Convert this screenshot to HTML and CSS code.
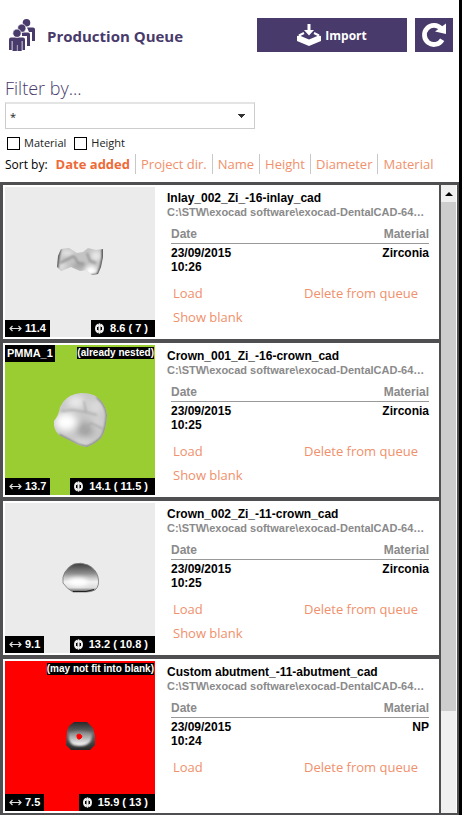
FILE: index.html
```html
<!DOCTYPE html>
<html lang="en">
<head>
    <meta charset="UTF-8">
    <meta name="viewport" content="width=device-width, initial-scale=1.0">
    <title>Production Queue</title>
    <link rel="stylesheet" href="styles.css">
</head>
<body>
    <!-- shared icons and shading -->
    <svg class="defs" width="0" height="0" aria-hidden="true">
        <defs>
            <symbol id="arrow-h" viewBox="0 0 13 7">
                <path d="M1 3.5h11M3.5 1L1 3.5 3.5 6M9.500 1L12 3.5 9.500 6" fill="none" stroke="#ddd" stroke-width="1.2"/>
            </symbol>
            <symbol id="arrow-v" viewBox="0 0 9 11">
                <path d="M3.500 0.500Q0 1.500 0 5.500t3.500 5zM5.500 0.500Q9 1.500 9 5.500t-3.500 5z" fill="#eee"/>
                <path d="M4.500 0l2.500 3.500H2zM4.500 11L2 7.500h5zM4 3h1v5H4z" fill="#eee"/>
                <path d="M2.500 4v3M6.500 4v3" stroke="#000" stroke-width="1"/>
            </symbol>
            <filter id="soft" x="-50%" y="-50%" width="200%" height="200%"><feGaussianBlur stdDeviation="2"/></filter>
            <filter id="softer" x="-50%" y="-50%" width="200%" height="200%"><feGaussianBlur stdDeviation="3.500"/></filter>
            <filter id="fine" x="-50%" y="-50%" width="200%" height="200%"><feGaussianBlur stdDeviation="1"/></filter>
            <linearGradient id="dome" x1="0" y1="0" x2="0" y2="1">
                <stop offset="0" stop-color="#3c3c3c"/>
                <stop offset="0.350" stop-color="#8c8c8c"/>
                <stop offset="0.500" stop-color="#c4c4c4"/>
                <stop offset="0.650" stop-color="#f2f2f2"/>
                <stop offset="0.850" stop-color="#dcdcdc"/>
                <stop offset="1" stop-color="#555"/>
            </linearGradient>
            <linearGradient id="cup" x1="0" y1="0" x2="0" y2="1">
                <stop offset="0" stop-color="#2a2a2a"/>
                <stop offset="0.400" stop-color="#6a6a6a"/>
                <stop offset="1" stop-color="#262626"/>
            </linearGradient>
            <linearGradient id="cup-in" x1="0" y1="0" x2="0" y2="1">
                <stop offset="0" stop-color="#777"/>
                <stop offset="1" stop-color="#fff"/>
            </linearGradient>
        </defs>
    </svg>

    <header>
        <svg class="people" width="26" height="32" viewBox="0 0 26 32" aria-hidden="true">
            <g fill="#483a6b">
                <path d="M18 8.500h6q2 0 2 2V22h-3V13h-3z"/>
                <circle cx="17.500" cy="3.800" r="3.800"/>
                <path d="M13 13.500h6q2 0 2 2V27h-3V17h-5z"/>
                <circle cx="12.800" cy="9.200" r="4.200" stroke="#fff" stroke-width="0.800"/>
                <path d="M2 18.500h12q2 0 2 2V31h-2.500v-9h-0.800v10H8.500v-6h-0.600v6H3.500V22h-0.800v9H0V20.500q0-2 2-2z"/>
                <circle cx="8" cy="14.200" r="4.200" stroke="#fff" stroke-width="0.800"/>
            </g>
        </svg>
        <h1>Production Queue</h1>
        <button class="import-btn" type="button">
            <svg width="24" height="22" viewBox="0 0 24 22" aria-hidden="true">
                <path d="M10.500 0h3v6H17l-5 5.500L7 6h3.500z" fill="#fff"/>
                <path d="M7 9L2 11.500M17 9l5 2.500" fill="none" stroke="#fff" stroke-width="2"/>
                <path d="M0 12l2.500-0.500L12 15.500l9.500-4L24 12v5l-12 5-12-5z" fill="#fff"/>
            </svg>
            Import
        </button>
        <button class="refresh-btn" type="button" aria-label="Refresh">
            <svg width="26" height="26" viewBox="0 0 26 26" aria-hidden="true">
                <path d="M20.300 6.900A9.500 9.500 0 1 0 21.200 17.700" fill="none" stroke="#fff" stroke-width="4.800"/>
                <path d="M25 1.500v10.500l-11-2.500z" fill="#fff"/>
            </svg>
        </button>
    </header>

    <section class="filter">
        <h2><label for="filter">Filter by...</label></h2>
        <select id="filter">
            <option>*</option>
        </select>
        <div class="checks">
            <label><input type="checkbox"> Material</label>
            <label><input type="checkbox"> Height</label>
        </div>
    </section>

    <nav class="sort">
        <span>Sort by:</span>
        <ul>
            <li><a class="active" href="#">Date added</a></li>
            <li><a href="#">Project dir.</a></li>
            <li><a href="#">Name</a></li>
            <li><a href="#">Height</a></li>
            <li><a href="#">Diameter</a></li>
            <li><a href="#">Material</a></li>
        </ul>
    </nav>

    <main class="queue">
        <div class="jobs">
            <article class="job">
                <div class="thumb">
                    <svg width="150" height="150" viewBox="0 0 150 150" aria-hidden="true">
                        <clipPath id="inlay"><path d="M56 62L64 61 72 66 78 65 83 61 91 63 98 62 98 70 96 80 93 87 87 88 81 83 75 84 66 80 56 84 52 80 53 69z"/></clipPath>
                        <g clip-path="url(#inlay)">
                            <path d="M50 59h50v31H50z" fill="#c4c4c4"/>
                            <g filter="url(#soft)">
                                <ellipse cx="62" cy="66" rx="7" ry="3" fill="#e4e4e4"/>
                                <ellipse cx="57" cy="79" rx="4" ry="5" fill="#ddd"/>
                                <ellipse cx="86" cy="84" rx="6" ry="5" fill="#fff"/>
                                <ellipse cx="91" cy="69" rx="5" ry="5" fill="#e8e8e8"/>
                                <ellipse cx="74" cy="79" rx="7" ry="3" fill="#a4a4a4"/>
                            </g>
                            <path d="M55 76l8-4 6-3M69 69l4 7 6 1M82 66l3 8 6 2" fill="none" stroke="#959595" stroke-width="2" filter="url(#fine)"/>
                            <path d="M98 61v10l-2 9-3 8-7 1M55 62l-2 8-1 11" fill="none" stroke="#222" stroke-width="2" filter="url(#fine)"/>
                        </g>
                    </svg>
                    <span class="tag bottom left"><svg width="13" height="7"><use href="#arrow-h"/></svg>11.4</span>
                    <span class="tag bottom right"><svg width="9" height="11"><use href="#arrow-v"/></svg>8.6 ( 7 )</span>
                </div>
                <div class="info">
                    <h3>Inlay_002_Zi_-16-inlay_cad</h3>
                    <p class="path">C:\STW\exocad software\exocad-DentalCAD-64bit\CAM</p>
                    <table>
                        <thead><tr><th>Date</th><th>Material</th></tr></thead>
                        <tbody><tr><td>23/09/2015<br>10:26</td><td>Zirconia</td></tr></tbody>
                    </table>
                    <div class="actions">
                        <a href="#">Load</a>
                        <a href="#">Delete from queue</a>
                        <a href="#">Show blank</a>
                    </div>
                </div>
            </article>

            <article class="job">
                <div class="thumb nested">
                    <svg width="150" height="150" viewBox="0 0 150 150" aria-hidden="true">
                        <clipPath id="crown"><path d="M58 57Q64 49 76 48 87 48 92 52 101 59 102 70 101 86 96 93 90 99 82 102 74 101 66 96L54 90Q48 84 49 76 54 70 55 62z"/></clipPath>
                        <g clip-path="url(#crown)">
                            <path d="M45 45h60v60H45z" fill="#c8c8c8"/>
                            <g filter="url(#softer)">
                                <ellipse cx="61" cy="77" rx="11" ry="9" fill="#fff"/>
                                <ellipse cx="71" cy="57" rx="9" ry="6" fill="#ececec"/>
                                <ellipse cx="91" cy="62" rx="8" ry="7" fill="#dcdcdc"/>
                                <ellipse cx="92" cy="77" rx="6" ry="5" fill="#d6d6d6"/>
                                <ellipse cx="80" cy="85" rx="8" ry="8" fill="#a0a0a0"/>
                                <ellipse cx="78" cy="97" rx="9" ry="4" fill="#ddd"/>
                            </g>
                            <path d="M56 66l12-1 12 2 12 3M79 56l2 11M98 84l-12-6-8 8" fill="none" stroke="#aaa" stroke-width="1.500" filter="url(#fine)"/>
                            <path d="M92 52Q101 59 102 70 101 86 96 93 90 99 82 102 74 101 66 96L54 90" fill="none" stroke="#777" stroke-width="2" filter="url(#fine)"/>
                        </g>
                    </svg>
                    <span class="tag top left">PMMA_1</span>
                    <span class="note">(already nested)</span>
                    <span class="tag bottom left"><svg width="13" height="7"><use href="#arrow-h"/></svg>13.7</span>
                    <span class="tag bottom right"><svg width="9" height="11"><use href="#arrow-v"/></svg>14.1 ( 11.5 )</span>
                </div>
                <div class="info">
                    <h3>Crown_001_Zi_-16-crown_cad</h3>
                    <p class="path">C:\STW\exocad software\exocad-DentalCAD-64bit\CAM</p>
                    <table>
                        <thead><tr><th>Date</th><th>Material</th></tr></thead>
                        <tbody><tr><td>23/09/2015<br>10:25</td><td>Zirconia</td></tr></tbody>
                    </table>
                    <div class="actions">
                        <a href="#">Load</a>
                        <a href="#">Delete from queue</a>
                        <a href="#">Show blank</a>
                    </div>
                </div>
            </article>

            <article class="job">
                <div class="thumb">
                    <svg width="150" height="150" viewBox="0 0 150 150" aria-hidden="true">
                        <path d="M69 61Q76 59 83 62 91 66 93 74 95 83 90 87 86 89 81 89L68 89Q62 86 58 80 57 74 60 69 64 63 69 61z" fill="url(#dome)" stroke="#777" stroke-width="0.800"/>
                        <ellipse cx="73" cy="79" rx="10" ry="4" fill="#fff" filter="url(#soft)"/>
                        <path d="M68 88.500h13l8-2" fill="none" stroke="#222"/>
                    </svg>
                    <span class="tag bottom left"><svg width="13" height="7"><use href="#arrow-h"/></svg>9.1</span>
                    <span class="tag bottom right"><svg width="9" height="11"><use href="#arrow-v"/></svg>13.2 ( 10.8 )</span>
                </div>
                <div class="info">
                    <h3>Crown_002_Zi_-11-crown_cad</h3>
                    <p class="path">C:\STW\exocad software\exocad-DentalCAD-64bit\CAM</p>
                    <table>
                        <thead><tr><th>Date</th><th>Material</th></tr></thead>
                        <tbody><tr><td>23/09/2015<br>10:25</td><td>Zirconia</td></tr></tbody>
                    </table>
                    <div class="actions">
                        <a href="#">Load</a>
                        <a href="#">Delete from queue</a>
                        <a href="#">Show blank</a>
                    </div>
                </div>
            </article>

            <article class="job">
                <div class="thumb misfit">
                    <svg width="150" height="150" viewBox="0 0 150 150" aria-hidden="true">
                        <path d="M69 61h13l6 6 2 8v9l-5 5H66l-5-5 1-14 2-5z" fill="url(#cup)"/>
                        <path d="M64 72Q75 68 87 72 88 81 81 84 75 86 68 84 62 80 64 72z" fill="url(#cup-in)" filter="url(#fine)"/>
                        <path d="M72 74l2-1 2 1 1 2-2 2h-2l-1-2z" fill="#f00" stroke="#f00"/>
                    </svg>
                    <span class="note">(may not fit into blank)</span>
                    <span class="tag bottom left"><svg width="13" height="7"><use href="#arrow-h"/></svg>7.5</span>
                    <span class="tag bottom right"><svg width="9" height="11"><use href="#arrow-v"/></svg>15.9 ( 13 )</span>
                </div>
                <div class="info">
                    <h3>Custom abutment_-11-abutment_cad</h3>
                    <p class="path">C:\STW\exocad software\exocad-DentalCAD-64bit\CAM</p>
                    <table>
                        <thead><tr><th>Date</th><th>Material</th></tr></thead>
                        <tbody><tr><td>23/09/2015<br>10:24</td><td>NP</td></tr></tbody>
                    </table>
                    <div class="actions">
                        <a href="#">Load</a>
                        <a href="#">Delete from queue</a>
                    </div>
                </div>
            </article>
        </div>
        <div class="scrollbar">
            <button type="button" aria-label="Scroll up">
                <svg width="8" height="4" viewBox="0 0 8 4"><path d="M0 4l4-4 4 4z"/></svg>
            </button>
            <div class="thumb-bar"></div>
        </div>
    </main>
</body>
</html>
```
FILE: styles.css
```css
* {
    box-sizing: border-box;
}

body {
    font-family: "Open Sans", "Noto Sans", sans-serif;
    margin: 0;
    min-height: 100vh;
    display: flex;
    flex-direction: column;
    background-color: white;
    border-right: 3px solid black;
}

h1, h2, h3, p, ul {
    margin: 0;
    padding: 0;
}

a {
    color: #f0906c;
    text-decoration: none;
}

.defs {
    position: absolute;
}

header {
    display: flex;
    align-items: center;
    gap: 8px;
    padding: 18px 6px 0 9px;
}

header h1 {
    flex: 1;
    padding: 2px 0 0 4px;
    font-size: 15px;
    line-height: 32px;
    color: #483a6b;
    white-space: nowrap;
}

header button {
    display: flex;
    align-items: center;
    justify-content: center;
    gap: 4px;
    height: 34px;
    padding: 0;
    border: none;
    background-color: #483a6b;
    color: white;
    font-family: inherit;
    font-size: 12px;
    font-weight: bold;
    cursor: pointer;
}

.import-btn {
    width: 150px;
}

.refresh-btn {
    width: 38px;
}

.filter {
    padding: 22px 5px 0;
}

.filter h2 {
    font-size: 18px;
    font-weight: 300;
    line-height: 28px;
    color: #483a6b;
}

.filter select {
    display: block;
    width: 100%;
    max-width: 250px;
    height: 27px;
    padding: 0 4px;
    border: 1px solid #ccc;
    border-top: 2px solid #e4e4e4;
    border-radius: 0;
    appearance: none;
    background: linear-gradient(to bottom right, #333 50%, transparent 50%) right 8px center / 4px 4px no-repeat,
        linear-gradient(to bottom left, #333 50%, transparent 50%) right 12px center / 4px 4px no-repeat,
        white;
    color: #222;
    font-family: inherit;
    font-size: 11px;
}

.checks {
    display: flex;
    gap: 8px;
    padding: 6px 2px 0;
}

.checks label {
    display: flex;
    align-items: center;
    gap: 4px;
    font-size: 11px;
    line-height: 16px;
    color: #222;
}

.checks input {
    appearance: none;
    width: 13px;
    height: 13px;
    margin: 0;
    border: 1px solid black;
    background-color: white;
}

.sort {
    display: flex;
    align-items: center;
    gap: 8px;
    padding: 3px 5px 8px;
    font-size: 12px;
    white-space: nowrap;
}

.sort ul {
    display: flex;
    list-style: none;
    font-size: 13px;
    line-height: 20px;
}

.sort li + li {
    margin-left: 5px;
    padding-left: 5px;
    border-left: 1px solid #c8c8c8;
}

.sort .active {
    color: #ee6a38;
    font-weight: bold;
}

.queue {
    flex: 1;
    display: flex;
    padding-right: 1px;
    border: 1px solid #4f4f51;
    border-width: 3px 2px 2px 3px;
}

.jobs {
    flex: 1;
    min-width: 0;
    display: flex;
    flex-direction: column;
    gap: 4px;
    background-color: #4f4f51;
    border-right: 2px solid #4f4f51;
}

.job {
    display: flex;
    gap: 12px;
    padding: 2px;
    background-color: white;
    font-family: "Liberation Sans", Arial, sans-serif;
    font-weight: bold;
}

.thumb {
    position: relative;
    flex: none;
    width: 150px;
    height: 150px;
    background-color: #ebebeb;
}

.thumb > svg {
    display: block;
}

.nested {
    background-color: #9acd32;
}

.misfit {
    background-color: #ff0000;
}

.tag, .note {
    position: absolute;
    background-color: black;
    color: white;
    font-size: 11px;
    white-space: nowrap;
}

.tag {
    display: flex;
    align-items: center;
    gap: 3px;
    padding: 0 4px;
    line-height: 17px;
}

.top {
    top: 0;
    padding: 0 2px;
}

.bottom {
    bottom: 0;
}

.left {
    left: 0;
}

.right {
    right: 0;
    gap: 6px;
    padding-right: 7px;
}

.note {
    top: 2px;
    right: 1px;
    font-size: 10px;
    line-height: 12px;
}

.info {
    flex: 1;
    min-width: 0;
    padding: 4px 8px 0 0;
}

.info h3 {
    font-size: 12px;
    line-height: 14px;
}

.path {
    padding-right: 2px;
    font-size: 11px;
    line-height: 14px;
    color: #8a8a8a;
    overflow: hidden;
    text-overflow: ellipsis;
    white-space: nowrap;
}

table {
    width: calc(100% - 4px);
    margin: 8px 0 0 4px;
    border-collapse: collapse;
    font-size: 12px;
    line-height: 14px;
}

th {
    padding: 0 0 2px;
    border-bottom: 1px solid #999;
    color: #8a8a8a;
    text-align: left;
}

td {
    padding: 2px 0 0;
    vertical-align: top;
}

th:last-child, td:last-child {
    text-align: right;
}

.actions {
    display: grid;
    grid-template-columns: 1fr auto;
    row-gap: 4px;
    padding: 9px 11px 0 6px;
    font-family: "Open Sans", "Noto Sans", sans-serif;
    font-size: 13px;
    font-weight: normal;
    line-height: 20px;
}

.scrollbar {
    width: 15px;
    display: flex;
    flex-direction: column;
    background-color: #f0f0f0;
}

.scrollbar button {
    display: flex;
    align-items: center;
    justify-content: center;
    height: 17px;
    padding: 0;
    border: none;
    background-color: #f0f0f0;
}

.thumb-bar {
    height: 81%;
    background-color: #cdcdcd;
}
```
